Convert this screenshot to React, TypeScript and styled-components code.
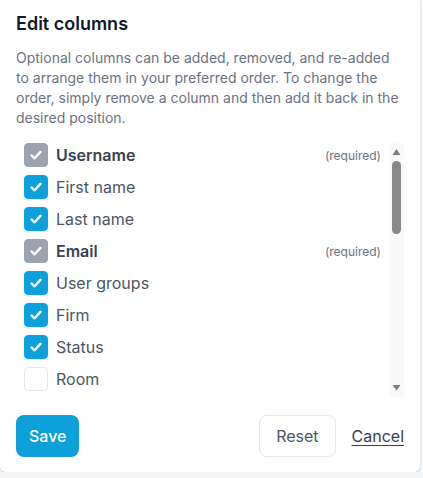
import React, { useLayoutEffect, useRef, useState } from "react";
import styled, { createGlobalStyle } from "styled-components";

const Global = createGlobalStyle`
  html, body { margin: 0; padding: 0; background: #f4f5f7; }
  body { font-family: Inter, "Noto Sans", sans-serif; -webkit-font-smoothing: antialiased; }
  * { box-sizing: border-box; }
`;

const Panel = styled.div`
  width: 420px;
  background: #ffffff;
  border-radius: 0 0 6px 6px;
  box-shadow: 0 1px 3px rgba(0, 0, 0, 0.12), 0 1px 2px rgba(0, 0, 0, 0.06);
  padding: 12px 16px 15px 16px;
  display: flex;
  flex-direction: column;
`;

const Title = styled.h2`
  margin: 0;
  font-size: 18px;
  line-height: 24px;
  font-weight: 600;
  color: #111827;
`;

const Description = styled.p`
  margin: 12px 0 15px 0;
  font-size: 14px;
  line-height: 20px;
  color: #6b7280;
`;

const ScrollArea = styled.div`
  display: flex;
  height: 254px;
`;

const Viewport = styled.div`
  flex: 1;
  overflow-y: auto;
  display: flex;
  flex-direction: column;
  gap: 8px;
  padding: 0 8px;
  scrollbar-width: none;
  &::-webkit-scrollbar {
    display: none;
  }
`;

const Rail = styled.div`
  width: 15px;
  flex-shrink: 0;
  background: #f9f9f9;
  display: flex;
  flex-direction: column;
`;

const ArrowButton = styled.div`
  height: 16px;
  flex-shrink: 0;
  display: flex;
  justify-content: center;
`;

const Track = styled.div`
  flex: 1;
  position: relative;
`;

const Thumb = styled.div`
  position: absolute;
  left: 3px;
  right: 3px;
  border-radius: 5px;
  background: #888888;
`;

const Row = styled.label`
  display: flex;
  align-items: center;
  gap: 8px;
  min-height: 24px;
  flex-shrink: 0;
  cursor: pointer;
`;

const Box = styled.span<{ $checked: boolean; $locked: boolean }>`
  width: 24px;
  height: 24px;
  flex-shrink: 0;
  border-radius: 4px;
  display: flex;
  align-items: center;
  justify-content: center;
  background: ${(p) => (p.$locked ? "#9ca3af" : p.$checked ? "#0ea0db" : "#ffffff")};
  border: 1px solid ${(p) => (p.$locked ? "#9ca3af" : p.$checked ? "#0ea0db" : "#e5e7eb")};
`;

const Label = styled.span<{ $bold: boolean }>`
  flex: 1;
  font-size: 16px;
  line-height: 24px;
  font-weight: ${(p) => (p.$bold ? 600 : 400)};
  color: ${(p) => (p.$bold ? "#374151" : "#4b5563")};
`;

const Required = styled.span`
  font-size: 12px;
  color: #6b7280;
`;

const Footer = styled.div`
  display: flex;
  align-items: center;
  margin-top: 18px;
`;

const SaveButton = styled.button`
  height: 42px;
  padding: 0 13px;
  border: none;
  border-radius: 8px;
  background: #0ea0db;
  color: #ffffff;
  font-family: inherit;
  font-size: 16px;
  font-weight: 500;
  cursor: pointer;
`;

const Spacer = styled.div`
  flex: 1;
`;

const ResetButton = styled.button`
  height: 42px;
  padding: 0 16px;
  border: 1px solid #e5e7eb;
  border-radius: 8px;
  background: #ffffff;
  color: #4b5563;
  font-family: inherit;
  font-size: 16px;
  font-weight: 400;
  cursor: pointer;
`;

const CancelLink = styled.button`
  margin-left: 16px;
  padding: 0;
  border: none;
  background: none;
  color: #374151;
  font-family: inherit;
  font-size: 16px;
  text-decoration: underline;
  text-underline-offset: 3px;
  cursor: pointer;
`;

type Col = { name: string; required?: boolean; checked: boolean };

const initial: Col[] = [
  { name: "Username", required: true, checked: true },
  { name: "First name", checked: true },
  { name: "Last name", checked: true },
  { name: "Email", required: true, checked: true },
  { name: "User groups", checked: true },
  { name: "Firm", checked: true },
  { name: "Status", checked: true },
  { name: "Room", checked: false },
  { name: "Phone", checked: false },
  { name: "Mobile", checked: false },
  { name: "Job title", checked: false },
  { name: "Department", checked: false },
  { name: "Office", checked: false },
  { name: "Language", checked: false },
  { name: "Time zone", checked: false },
  { name: "Created", checked: false },
  { name: "Last login", checked: false },
  { name: "Country", checked: false },
  { name: "City", checked: false },
  { name: "Address", checked: false },
  { name: "Manager", checked: false },
  { name: "Notes", checked: false },
  { name: "Tags", checked: false },
  { name: "ID", checked: false },
];

const Check = () => (
  <svg width="14" height="14" viewBox="0 0 14 14" fill="none">
    <path d="M2.5 7.4 L5.6 10.3 L11.5 3.9" stroke="#ffffff" strokeWidth="2.4" strokeLinecap="round" strokeLinejoin="round" />
  </svg>
);

const UpArrow = () => (
  <svg width="15" height="16" viewBox="0 0 15 16">
    <path d="M7.5 6 L11.5 12 L3.5 12 Z" fill="#7d7d7d" />
  </svg>
);

const DownArrow = () => (
  <svg width="15" height="16" viewBox="0 0 15 16">
    <path d="M3.5 4 L11.5 4 L7.5 9.5 Z" fill="#7d7d7d" />
  </svg>
);

export default function App() {
  const [cols, setCols] = useState<Col[]>(initial);
  const viewRef = useRef<HTMLDivElement>(null);
  const trackRef = useRef<HTMLDivElement>(null);
  const [thumb, setThumb] = useState({ top: 2, height: 74 });

  const update = () => {
    const v = viewRef.current;
    const t = trackRef.current;
    if (!v || !t) return;
    const avail = t.clientHeight - 4;
    const h = Math.max(20, (avail * v.clientHeight) / v.scrollHeight);
    const maxScroll = v.scrollHeight - v.clientHeight;
    const top = 2 + (maxScroll > 0 ? (v.scrollTop / maxScroll) * (avail - h) : 0);
    setThumb({ top, height: h });
  };

  useLayoutEffect(update, [cols]);

  const toggle = (i: number) =>
    setCols((c) => c.map((col, j) => (j === i && !col.required ? { ...col, checked: !col.checked } : col)));

  return (
    <>
      <Global />
      <Panel>
        <Title>Edit columns</Title>
        <Description>
          Optional columns can be added, removed, and re-added to arrange them in your preferred order. To change the
          order, simply remove a column and then add it back in the desired position.
        </Description>
        <ScrollArea>
          <Viewport ref={viewRef} onScroll={update}>
            {cols.map((c, i) => (
              <Row key={c.name} onClick={() => toggle(i)}>
                <Box $checked={c.checked} $locked={!!c.required}>
                  {c.checked && <Check />}
                </Box>
                <Label $bold={!!c.required}>{c.name}</Label>
                {c.required && <Required>(required)</Required>}
              </Row>
            ))}
          </Viewport>
          <Rail>
            <ArrowButton>
              <UpArrow />
            </ArrowButton>
            <Track ref={trackRef}>
              <Thumb style={{ top: thumb.top, height: thumb.height }} />
            </Track>
            <ArrowButton>
              <DownArrow />
            </ArrowButton>
          </Rail>
        </ScrollArea>
        <Footer>
          <SaveButton>Save</SaveButton>
          <Spacer />
          <ResetButton>Reset</ResetButton>
          <CancelLink>Cancel</CancelLink>
        </Footer>
      </Panel>
    </>
  );
}
